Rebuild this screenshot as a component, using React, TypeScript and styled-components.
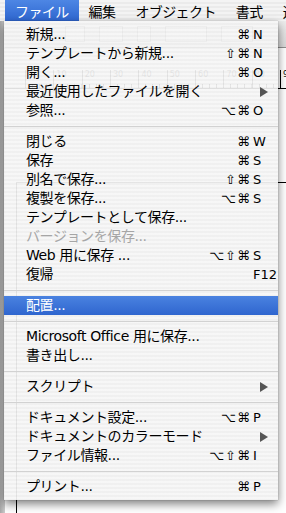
import React from "react";
import styled, { createGlobalStyle, css } from "styled-components";

const GlobalStyle = createGlobalStyle`
  html, body { margin: 0; padding: 0; }
  body { width: 286px; height: 513px; overflow: hidden; background: #fff; }
`;

const FONT = `"DejaVu Sans", "Noto Sans CJK JP", sans-serif`;

const Screen = styled.div`
  position: relative;
  width: 286px;
  height: 513px;
  overflow: hidden;
  display: flex;
  flex-direction: column;
  font-family: ${FONT};
`;

const MenuBar = styled.div`
  height: 21px;
  flex: none;
  display: flex;
  align-items: stretch;
  padding-left: 5px;
  background: repeating-linear-gradient(to bottom, #f4f4f4 0 2px, #ebebeb 2px 4px);
`;

const MenuTitle = styled.div<{ $active?: boolean }>`
  display: flex;
  align-items: center;
  padding: 0 10px;
  font-size: 14px;
  letter-spacing: -0.6px;
  color: #000;
  white-space: nowrap;
  ${(p) =>
    p.$active &&
    css`
      color: #fff;
      background: linear-gradient(to bottom, #4d86e4, #2f67d0);
    `}
`;

/* ---------- backdrop: the application window behind the menu ---------- */

const Workspace = styled.div`
  flex: 1;
  display: flex;
  background: #fff;
`;

const FrameEdge = styled.div`
  width: 5px;
  flex: none;
  background: linear-gradient(to right, #a8a8a8, #cdcdcd);
`;

const DocArea = styled.div`
  flex: 1;
  display: flex;
  flex-direction: column;
`;

const Toolbar = styled.div`
  height: 26px;
  flex: none;
  display: flex;
  align-items: center;
  gap: 14px;
  padding-left: 60px;
  background: linear-gradient(to bottom, #ececec, #d8d8d8);
  border-bottom: 1px solid #8e8e8e;
`;

const ToolBox = styled.div<{ $w: number }>`
  width: ${(p) => p.$w}px;
  height: 14px;
  border: 1px solid #7a7a7a;
  background: #f8f8f8;
`;

const Spacer = styled.div<{ $h: number }>`
  height: ${(p) => p.$h}px;
  flex: none;
`;

const Ruler = styled.div`
  height: 18px;
  flex: none;
  display: flex;
  padding-left: 20px;
  border-bottom: 1px solid #000;
  background: #fff;
  overflow: hidden;
`;

const RulerCell = styled.div`
  flex: none;
  width: 28.35px;
  height: 18px;
  box-sizing: border-box;
  border-left: 1px solid #000;
  font-size: 8px;
  line-height: 9px;
  padding-left: 2px;
  color: #000;
  background: repeating-linear-gradient(to right, transparent 0 6px, #000 6px 7px) bottom / 100% 4px no-repeat;
`;

const Canvas = styled.div`
  flex: 1;
  display: flex;
  padding: 93px 0 0 11px;
`;

const Artboard = styled.div`
  flex: 1;
  border-top: 1px solid #000;
  border-left: 1px solid #000;
`;

/* ---------- the drop-down menu ---------- */

const Menu = styled.div`
  position: absolute;
  top: 21px;
  left: 4px;
  width: 274px;
  padding: 4px 0;
  background: repeating-linear-gradient(
    to bottom,
    rgba(246, 246, 246, 0.93) 0 2px,
    rgba(239, 239, 239, 0.93) 2px 4px
  );
  box-shadow: 0 4px 9px rgba(0, 0, 0, 0.5), 0 0 1px rgba(0, 0, 0, 0.35);
`;

const Row = styled.div<{ $active?: boolean; $disabled?: boolean }>`
  height: 19px;
  display: grid;
  grid-template-columns: 1fr auto 20px;
  column-gap: 2px;
  align-items: center;
  padding: 0 5px 0 22px;
  color: ${(p) => (p.$disabled ? "#a6a6a6" : "#000")};
  ${(p) =>
    p.$active &&
    css`
      color: #fff;
      background: linear-gradient(to bottom, #4a82e0, #2f66cf);
    `}
`;

const Label = styled.span`
  font-size: 14px;
  letter-spacing: -0.4px;
  white-space: nowrap;
  line-height: 19px;
`;

const Mods = styled.span`
  justify-self: end;
  font-family: "DejaVu Sans", sans-serif;
  font-size: 13px;
  letter-spacing: 1px;
  line-height: 19px;
`;

const Key = styled.span`
  justify-self: start;
  font-family: "DejaVu Sans", sans-serif;
  font-size: 13px;
  line-height: 19px;
`;

const Arrow = styled.svg`
  justify-self: start;
  margin-left: 7px;
  display: block;
`;

const Separator = styled.div`
  height: 12px;
  display: flex;
  align-items: center;
  &::after {
    content: "";
    flex: 1;
    height: 1px;
    background: #d2d2d2;
  }
`;

type Item =
  | { sep: true }
  | {
      sep?: false;
      label: string;
      mods?: string;
      keyName?: string;
      submenu?: boolean;
      disabled?: boolean;
      active?: boolean;
    };

const items: Item[] = [
  { label: "新規...", mods: "⌘", keyName: "N" },
  { label: "テンプレートから新規...", mods: "⇧⌘", keyName: "N" },
  { label: "開く...", mods: "⌘", keyName: "O" },
  { label: "最近使用したファイルを開く", submenu: true },
  { label: "参照...", mods: "⌥⌘", keyName: "O" },
  { sep: true },
  { label: "閉じる", mods: "⌘", keyName: "W" },
  { label: "保存", mods: "⌘", keyName: "S" },
  { label: "別名で保存...", mods: "⇧⌘", keyName: "S" },
  { label: "複製を保存...", mods: "⌥⌘", keyName: "S" },
  { label: "テンプレートとして保存..." },
  { label: "バージョンを保存...", disabled: true },
  { label: "Web 用に保存 ...", mods: "⌥⇧⌘", keyName: "S" },
  { label: "復帰", keyName: "F12" },
  { sep: true },
  { label: "配置...", active: true },
  { sep: true },
  { label: "Microsoft Office 用に保存..." },
  { label: "書き出し..." },
  { sep: true },
  { label: "スクリプト", submenu: true },
  { sep: true },
  { label: "ドキュメント設定...", mods: "⌥⌘", keyName: "P" },
  { label: "ドキュメントのカラーモード", submenu: true },
  { label: "ファイル情報...", mods: "⌥⇧⌘", keyName: "I" },
  { sep: true },
  { label: "プリント...", mods: "⌘", keyName: "P" },
];

const rulerLabels = ["0", "10", "20", "30", "40", "50", "60", "70", "80", "90"];

export default function App() {
  return (
    <Screen>
      <GlobalStyle />
      <MenuBar>
        <MenuTitle $active>ファイル</MenuTitle>
        <MenuTitle>編集</MenuTitle>
        <MenuTitle>オブジェクト</MenuTitle>
        <MenuTitle>書式</MenuTitle>
        <MenuTitle>選択</MenuTitle>
      </MenuBar>

      <Workspace>
        <FrameEdge />
        <DocArea>
          <Toolbar>
            <ToolBox $w={18} />
            <ToolBox $w={22} />
            <ToolBox $w={12} />
            <ToolBox $w={40} />
            <ToolBox $w={30} />
          </Toolbar>
          <Spacer $h={22} />
          <Ruler>
            {rulerLabels.map((l) => (
              <RulerCell key={l}>{l}</RulerCell>
            ))}
          </Ruler>
          <Canvas>
            <Artboard />
          </Canvas>
        </DocArea>
      </Workspace>

      <Menu>
        {items.map((it, i) =>
          it.sep ? (
            <Separator key={i} />
          ) : (
            <Row key={i} $active={it.active} $disabled={it.disabled}>
              <Label>{it.label}</Label>
              <Mods>{it.mods ?? ""}</Mods>
              {it.submenu ? (
                <Arrow width="8" height="10" viewBox="0 0 8 10">
                  <polygon points="0,0 8,5 0,10" fill="#555" />
                </Arrow>
              ) : (
                <Key>{it.keyName ?? ""}</Key>
              )}
            </Row>
          )
        )}
      </Menu>
    </Screen>
  );
}
